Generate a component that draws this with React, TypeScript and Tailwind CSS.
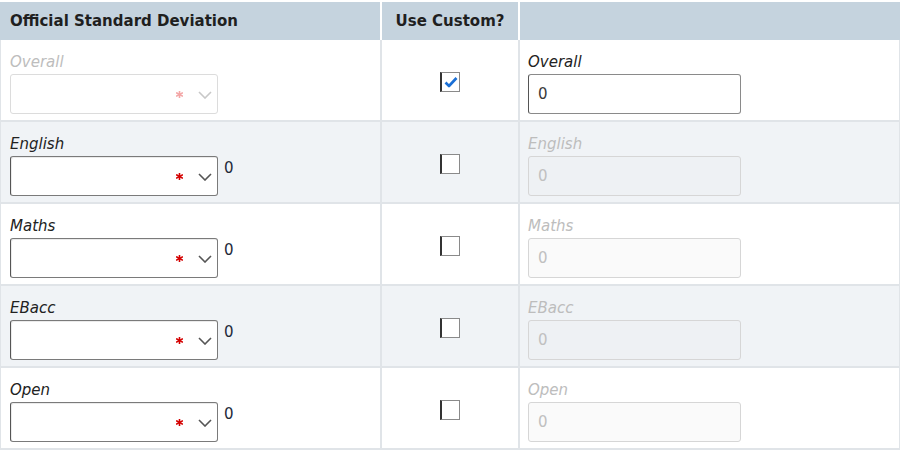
import React from "react";

type Row = { name: string; custom: boolean; disabledOfficial: boolean; showZero: boolean };

const rows: Row[] = [
  { name: "Overall", custom: true, disabledOfficial: true, showZero: false },
  { name: "English", custom: false, disabledOfficial: false, showZero: true },
  { name: "Maths", custom: false, disabledOfficial: false, showZero: true },
  { name: "EBacc", custom: false, disabledOfficial: false, showZero: true },
  { name: "Open", custom: false, disabledOfficial: false, showZero: true },
];

function Asterisk({ color }: { color: string }) {
  return (
    <svg width="7" height="7" viewBox="0 0 7 7">
      <g stroke={color} strokeWidth="1.6" strokeLinecap="square">
        <line x1="3.5" y1="0.5" x2="3.5" y2="6.5" />
        <line x1="0.8" y1="2" x2="6.2" y2="5" />
        <line x1="0.8" y1="5" x2="6.2" y2="2" />
      </g>
    </svg>
  );
}

function Chevron({ color }: { color: string }) {
  return (
    <svg width="14" height="8" viewBox="0 0 14 8">
      <polyline points="1,1 7,7 13,1" fill="none" stroke={color} strokeWidth="1.6" />
    </svg>
  );
}

function SelectBox({ disabled }: { disabled: boolean }) {
  return (
    <div
      className={
        "relative w-[208px] h-[40px] rounded-[3px] border bg-white " +
        (disabled
          ? "border-[#dcdcdc]"
          : "border-[#7a7a7a] border-l-[#555] shadow-[inset_1px_1px_0_rgba(0,0,0,0.08)]")
      }
    >
      <div className="absolute left-[165px] top-[16px]">
        <Asterisk color={disabled ? "#f3a6a6" : "#d40000"} />
      </div>
      <div className="absolute left-[187px] top-[16px]">
        <Chevron color={disabled ? "#c8c8c8" : "#555"} />
      </div>
    </div>
  );
}

function CheckBox({ checked }: { checked: boolean }) {
  return (
    <div className="mt-[4px] w-[20px] h-[20px] bg-white border border-[#8a8a8a] border-l-2 border-l-[#333] flex items-center justify-center">
      {checked && (
        <svg width="14" height="12" viewBox="0 0 14 12">
          <polyline points="1.5,6.5 5,10 12.5,2" fill="none" stroke="#1a6fd6" strokeWidth="2.6" strokeLinejoin="round" />
        </svg>
      )}
    </div>
  );
}

export default function App() {
  return (
    <div
      className="w-[901px] h-[452px] bg-white pt-[2px] text-[15px] text-[#222]"
      style={{ fontFamily: '"DejaVu Sans", Verdana, sans-serif' }}
    >
      <div className="w-[900px]">
        <div className="flex h-[38px]">
          <div className="w-[382px] border-r-2 border-white bg-[#c5d3de] pl-[10px] flex items-center font-bold text-[#1f1f1f]">
            Official Standard Deviation
          </div>
          <div className="w-[138px] border-r-2 border-white bg-[#c5d3de] flex items-center justify-center font-bold text-[#1f1f1f]">
            Use Custom?
          </div>
          <div className="w-[380px] bg-[#c5d3de]" />
        </div>
        {rows.map((r, i) => {
          const bg = i % 2 === 0 ? "bg-white" : "bg-[#f0f3f6]";
          return (
            <div key={r.name} className={"flex h-[82px] border-b-2 border-[#e0e4e8] " + bg}>
              <div className="w-[382px] border-l border-r-2 border-[#e0e4e8] pl-[9px] pt-[12px]">
                <div
                  className={"italic leading-[21px] mb-[1px] " + (r.disabledOfficial ? "text-[#bdbdbd]" : "text-[#222]")}
                >
                  {r.name}
                </div>
                <div className="flex items-start">
                  <SelectBox disabled={r.disabledOfficial} />
                  {r.showZero && <span className="ml-[6px] mt-[2px] leading-[21px] text-[#1e2a3a]">0</span>}
                </div>
              </div>
              <div className="w-[138px] border-r-2 border-[#e0e4e8] flex items-center justify-center">
                <CheckBox checked={r.custom} />
              </div>
              <div className="w-[380px] border-r border-[#e0e4e8] pl-[8px] pt-[12px]">
                <div className={"italic leading-[21px] mb-[1px] " + (r.custom ? "text-[#222]" : "text-[#bdbdbd]")}>
                  {r.name}
                </div>
                <div
                  className={
                    "w-[213px] h-[40px] rounded-[3px] border flex items-center pl-[9px] " +
                    (r.custom
                      ? "bg-white border-[#8a8a8a] border-l-[#555] text-[#3a3a3a]"
                      : "border-[#d6d6d6] text-[#c0c0c0] " + (i % 2 === 0 ? "bg-[#fafafa]" : "bg-[#eef1f4]"))
                  }
                >
                  0
                </div>
              </div>
            </div>
          );
        })}
      </div>
    </div>
  );
}
